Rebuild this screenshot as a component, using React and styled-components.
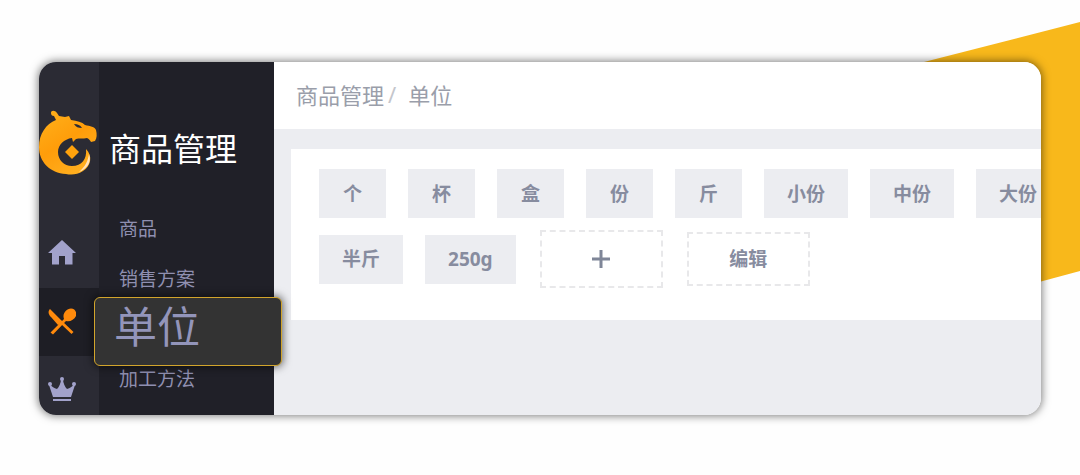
import React from "react";
import styled, { createGlobalStyle } from "styled-components";

const Global = createGlobalStyle`
  * { box-sizing: border-box; }
  body {
    margin: 0;
    background: #fefefe;
    font-family: "Noto Sans", "Noto Sans CJK SC", sans-serif;
  }
`;

const Page = styled.div`
  position: relative;
  display: flex;
  min-height: 100vh;
  padding: 62px 39px 60px;
  overflow: hidden;
`;

const Ribbon = styled.div`
  position: absolute;
  top: 22px;
  right: 0;
  width: 156px;
  height: 292px;
  background: #f8b81b;
  clip-path: polygon(0 40px, 100% 0, 100% 249px, 0 291px);
`;

const Window = styled.div`
  position: relative;
  flex: 1;
  min-width: 0;
  display: flex;
  border-radius: 17px;
  box-shadow: 0 0 9px 1px rgba(0, 0, 0, 0.5);
`;

const Rail = styled.nav`
  flex: none;
  width: 60px;
  display: flex;
  flex-direction: column;
  padding-top: 48px;
  background: #2b2b34;
  border-radius: 17px 0 0 17px;
  overflow: hidden;
`;

const Logo = styled.svg`
  width: 58px;
  height: 66px;
  margin-bottom: 44px;
  flex: none;
`;

const RailLink = styled.a`
  display: flex;
  padding: 20px 9px;
  color: ${(p) => (p.$active ? "#ff8a0c" : "#a2a2cb")};
  background: ${(p) => (p.$active ? "#1e1e25" : "transparent")};
  &:last-child { padding-bottom: 8px; }
  svg { width: 28px; height: 28px; }
`;

const Side = styled.aside`
  flex: none;
  width: 175px;
  padding-top: 63px;
  background: #202028;
`;

const SideTitle = styled.h1`
  margin: 0 0 31px;
  padding-left: 10px;
  font-size: 32px;
  line-height: 48px;
  font-weight: 400;
  color: #fff;
`;

const Menu = styled.ul`
  margin: 0;
  padding: 0;
  list-style: none;
`;

const MenuItem = styled.li`
  position: relative;
  height: 50px;
`;

const MenuLink = styled.a`
  display: block;
  padding-left: 20px;
  font-size: 19px;
  line-height: 51px;
  color: #8f8fb0;
  text-decoration: none;
`;

const Callout = styled.a`
  position: absolute;
  top: -7px;
  left: -5px;
  z-index: 2;
  width: 188px;
  height: 69px;
  padding-left: 19px;
  border: 1px solid #d2a52c;
  border-radius: 6px;
  background: #333;
  box-shadow: 0 0 9px 1px rgba(0, 0, 0, 0.6);
  font-size: 43px;
  line-height: 58px;
  color: #9395ba;
  text-decoration: none;
`;

const Main = styled.main`
  flex: 1;
  min-width: 0;
  background: #ecedf1;
  border-radius: 0 17px 17px 0;
  overflow: hidden;
`;

const Header = styled.header`
  display: flex;
  align-items: center;
  gap: 4px;
  height: 67px;
  padding: 0 0 4px 22px;
  background: #fff;
  font-size: 22px;
  color: #9a9eaa;
`;

const Crumb = styled.a`
  color: inherit;
  text-decoration: none;
`;

const Slash = styled.span`
  margin-right: 8px;
  color: #c4c6cc;
`;

const Card = styled.section`
  display: flex;
  flex-direction: column;
  gap: 12px;
  margin: 20px 0 0 17px;
  padding: 20px 0 32px 28px;
  background: #fff;
`;

const Row = styled.div`
  display: flex;
  align-items: center;
  gap: 22px;
`;

const Unit = styled.button`
  flex: none;
  min-width: 67px;
  height: 49px;
  padding: 0 23px;
  border: 0;
  background: #ecedf1;
  font: 700 19px/28px "Noto Sans", "Noto Sans CJK SC", sans-serif;
  color: #878c9f;
`;

const Action = styled(Unit)`
  width: 123px;
  height: ${(p) => (p.$tall ? 58 : 54)}px;
  border: 2px dashed #e8e8ea;
  background: #fff;
  margin-left: 2px;
  display: flex;
  align-items: center;
  justify-content: center;
`;

const DragonLogo = () => (
  <Logo viewBox="0 0 58 66" role="img" aria-label="logo">
    <defs>
      <linearGradient id="gold" x1="0" y1="0" x2="0.6" y2="1">
        <stop offset="0" stopColor="#ffb21c" />
        <stop offset="0.55" stopColor="#ff9d0a" />
        <stop offset="1" stopColor="#ffae1e" />
      </linearGradient>
    </defs>
    <path
      fill="url(#gold)"
      d="M12 3 C12 0 16 0 18 3 L20 6 L26 7 L30 6 L32 10 C38 11 43 12 46 15 C51 16 56 17 57 20 C58 24 58 28 56 31 L52 32 C51 30 50 29 48 28 C44 29 40 28 37 29 L34 32 L33 28 C25 29 19 35 19 42 C19 50 25 56 33 56 C43 56 48 49 47 39 C54 46 52 56 44 61 C38 65 32 65 27 64 C11 63 0 52 0 37 C0 24 7 14 17 10 L15 6 C13 6 12 5 12 3 Z"
    />
    <path fill="#2b2b34" d="M35 14 C39 14 41 15 43 18 C39 18 37 17 35 14 Z" />
    <path fill="#ffe3bd" d="M50 44 C53 52 48 59 40 62 C46 57 49 51 50 44 Z" />
    <path fill="#ffa20c" d="M33 35 L40 42 L33 49 L26 42 Z" />
  </Logo>
);

const HomeIcon = () => (
  <svg viewBox="0 0 28 28" fill="currentColor" aria-hidden="true">
    <path d="M14 0 L28 13 H24.500 V24.500 H17 V16 H11 V24.500 H4 V13 H0 Z" />
  </svg>
);

const DishIcon = () => (
  <svg viewBox="0 0 28 28" fill="currentColor" aria-hidden="true">
    <path d="M2 1 L13 12 L25.500 24 L23.500 26 L13 16 L10 17 L3 9 C0 6 0 3 2 1 Z" />
    <path d="M16 11 C14 6 18 1 23 0.500 C27 0.500 29 4 28 8 C26 12 22 14 18 13 L5 26.500 L2.500 24.500 Z" />
  </svg>
);

const CrownIcon = () => (
  <svg viewBox="0 0 28 28" fill="currentColor" aria-hidden="true">
    <path d="M5 21 L1 9 L2 8 C4 11 6 12 9 13 C11 11 13 7 13 3 H15 C15 7 17 11 19 13 C22 12 24 11 26 8 L27 9 L23 21 Z" />
    <circle cx="2" cy="8" r="2" />
    <circle cx="14" cy="3" r="2" />
    <circle cx="26" cy="8" r="2" />
    <path d="M5 23 H23 V25 H5 Z" />
  </svg>
);

const PlusIcon = () => (
  <svg width="18" height="18" viewBox="0 0 18 18" fill="none" stroke="#7f8698" strokeWidth="3" aria-hidden="true">
    <path d="M9 0 V18 M0 9 H18" />
  </svg>
);

export default function App() {
  return (
    <>
      <Global />
      <Page>
        <Ribbon />
        <Window>
          <Rail>
            <DragonLogo />
            <RailLink href="#home" aria-label="首页"><HomeIcon /></RailLink>
            <RailLink href="#goods" aria-label="商品管理" $active><DishIcon /></RailLink>
            <RailLink href="#vip" aria-label="会员"><CrownIcon /></RailLink>
          </Rail>
          <Side>
            <SideTitle>商品管理</SideTitle>
            <Menu>
              <MenuItem><MenuLink href="#products">商品</MenuLink></MenuItem>
              <MenuItem><MenuLink href="#plans">销售方案</MenuLink></MenuItem>
              <MenuItem><Callout href="#units">单位</Callout></MenuItem>
              <MenuItem><MenuLink href="#methods">加工方法</MenuLink></MenuItem>
            </Menu>
          </Side>
          <Main>
            <Header>
              <Crumb href="#goods">商品管理</Crumb>
              <Slash>/</Slash>
              <span>单位</span>
            </Header>
            <Card>
              <Row>
                {["个", "杯", "盒", "份", "斤", "小份", "中份", "大份"].map((u) => (
                  <Unit key={u}>{u}</Unit>
                ))}
              </Row>
              <Row>
                <Unit>半斤</Unit>
                <Unit>250g</Unit>
                <Action $tall aria-label="添加"><PlusIcon /></Action>
                <Action>编辑</Action>
              </Row>
            </Card>
          </Main>
        </Window>
      </Page>
    </>
  );
}
